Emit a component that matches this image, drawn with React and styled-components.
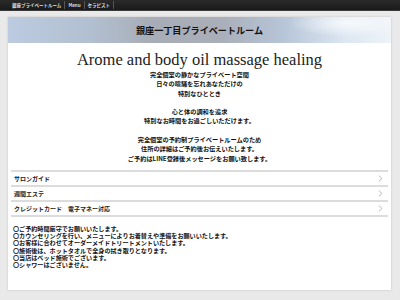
import styled, { createGlobalStyle } from "styled-components"

const GlobalStyle = createGlobalStyle`
  html, body {
    margin: 0;
    padding: 0;
    background: #e9e9e9;
  }
  body {
    font-family: "Noto Sans CJK JP", "Liberation Sans", sans-serif;
    color: #111;
  }
`

function App() {
  const nav = ["銀座プライベートルーム", "Menu", "セラピスト"]
  const intro = [
    ["完全個室の静かなプライベート空間", "日々の喧騒を忘れあなただけの", "特別なひととき"],
    ["心と体の調和を追求", "特別なお時間をお過ごしいただけます。"],
    [
      "完全個室の予約制プライベートルームのため",
      "住所の詳細はご予約後お伝えいたします。",
      "ご予約はLINE登録後メッセージをお願い致します。",
    ],
  ]
  const menu = ["サロンガイド", "週間エステ", "クレジットカード　電子マネー対応"]
  const notes = [
    "〇ご予約時間厳守でお願いいたします。",
    "〇カウンセリングを行い、メニューによりお着替えや準備をお願いいたします。",
    "〇お客様に合わせてオーダーメイドトリートメントいたします。",
    "〇施術後は、ホットタオルで全身の拭き取りとなります。",
    "〇当店はベッド施術でございます。",
    "〇シャワーはございません。",
  ]

  return (
    <>
      <GlobalStyle />
      <TopBar>
        {nav.map((item) => (
          <NavItem key={item}>{item}</NavItem>
        ))}
      </TopBar>
      <Page>
        <Panel>
          <Banner>
            <h1>銀座一丁目プライベートルーム</h1>
          </Banner>
          <Headline>Arome and body oil massage healing</Headline>
          <Intro>
            {intro.map((group, i) => (
              <p key={i}>
                {group.map((line) => (
                  <span key={line}>{line}</span>
                ))}
              </p>
            ))}
          </Intro>
          <MenuList>
            {menu.map((label) => (
              <MenuRow key={label}>
                <span>{label}</span>
                <svg width="5" height="7" viewBox="0 0 5 7">
                  <polyline points="0.8,0.6 4,3.5 0.8,6.4" fill="none" stroke="#aaa" strokeWidth="0.8" />
                </svg>
              </MenuRow>
            ))}
          </MenuList>
          <Notes>
            {notes.map((n) => (
              <li key={n}>{n}</li>
            ))}
          </Notes>
        </Panel>
      </Page>
    </>
  )
}

const TopBar = styled.nav`
  height: 11px;
  background: linear-gradient(#2a2a2a, #1a1a1a);
  border-bottom: 1px solid #3a3a3a;
  box-sizing: border-box;
  display: flex;
  align-items: center;
  padding-left: 9px;
`

const NavItem = styled.span`
  font-size: 4.5px;
  font-weight: bold;
  color: #ddd;
  padding: 0 3px;
  line-height: 8px;
  border-right: 1px solid #555;
`

const Page = styled.main`
  padding: 6px 9px 8px 8px;
`

const Panel = styled.section`
  background: #fff;
  box-shadow: 0 0 2px rgba(0, 0, 0, 0.18);
  padding-bottom: 22px;
`

const Banner = styled.header`
  height: 26px;
  display: flex;
  align-items: center;
  justify-content: center;
  background:
    radial-gradient(ellipse 60px 14px at 340px 6px, rgba(255, 255, 255, 0.75), transparent),
    linear-gradient(90deg, #bccbe0 0%, #b2bfd0 22%, #a7acb6 38%, #a9aeb8 55%, #b7c5d8 72%, #dce7f2 88%, #eef3f8 100%);
  h1 {
    margin: 0;
    font-size: 9.1px;
    font-weight: bold;
    color: #111;
  }
`

const Headline = styled.h2`
  margin: 7px 0 1px;
  font-family: "Liberation Serif", serif;
  font-weight: normal;
  font-size: 16.5px;
  line-height: 19px;
  text-align: center;
  color: #222;
`

const Intro = styled.div`
  text-align: center;
  font-size: 6.2px;
  font-weight: bold;
  line-height: 9.3px;
  p {
    margin: 0 0 9.3px;
  }
  p:last-child {
    margin-bottom: 0;
  }
  span {
    display: block;
  }
`

const MenuList = styled.ul`
  list-style: none;
  margin: 7px 3px 0;
  padding: 0;
  border-bottom: 2px solid #dcdcdc;
`

const MenuRow = styled.li`
  height: 15px;
  box-sizing: border-box;
  border-top: 2px solid #dcdcdc;
  display: flex;
  align-items: center;
  justify-content: space-between;
  padding: 0 5px 0 3px;
  font-size: 6px;
  font-weight: bold;
  color: #222;
`

const Notes = styled.ul`
  list-style: none;
  margin: 8px 0 0;
  padding: 0 0 0 5px;
  font-size: 6.1px;
  font-weight: bold;
  line-height: 7.2px;
  color: #111;
`

export default App
